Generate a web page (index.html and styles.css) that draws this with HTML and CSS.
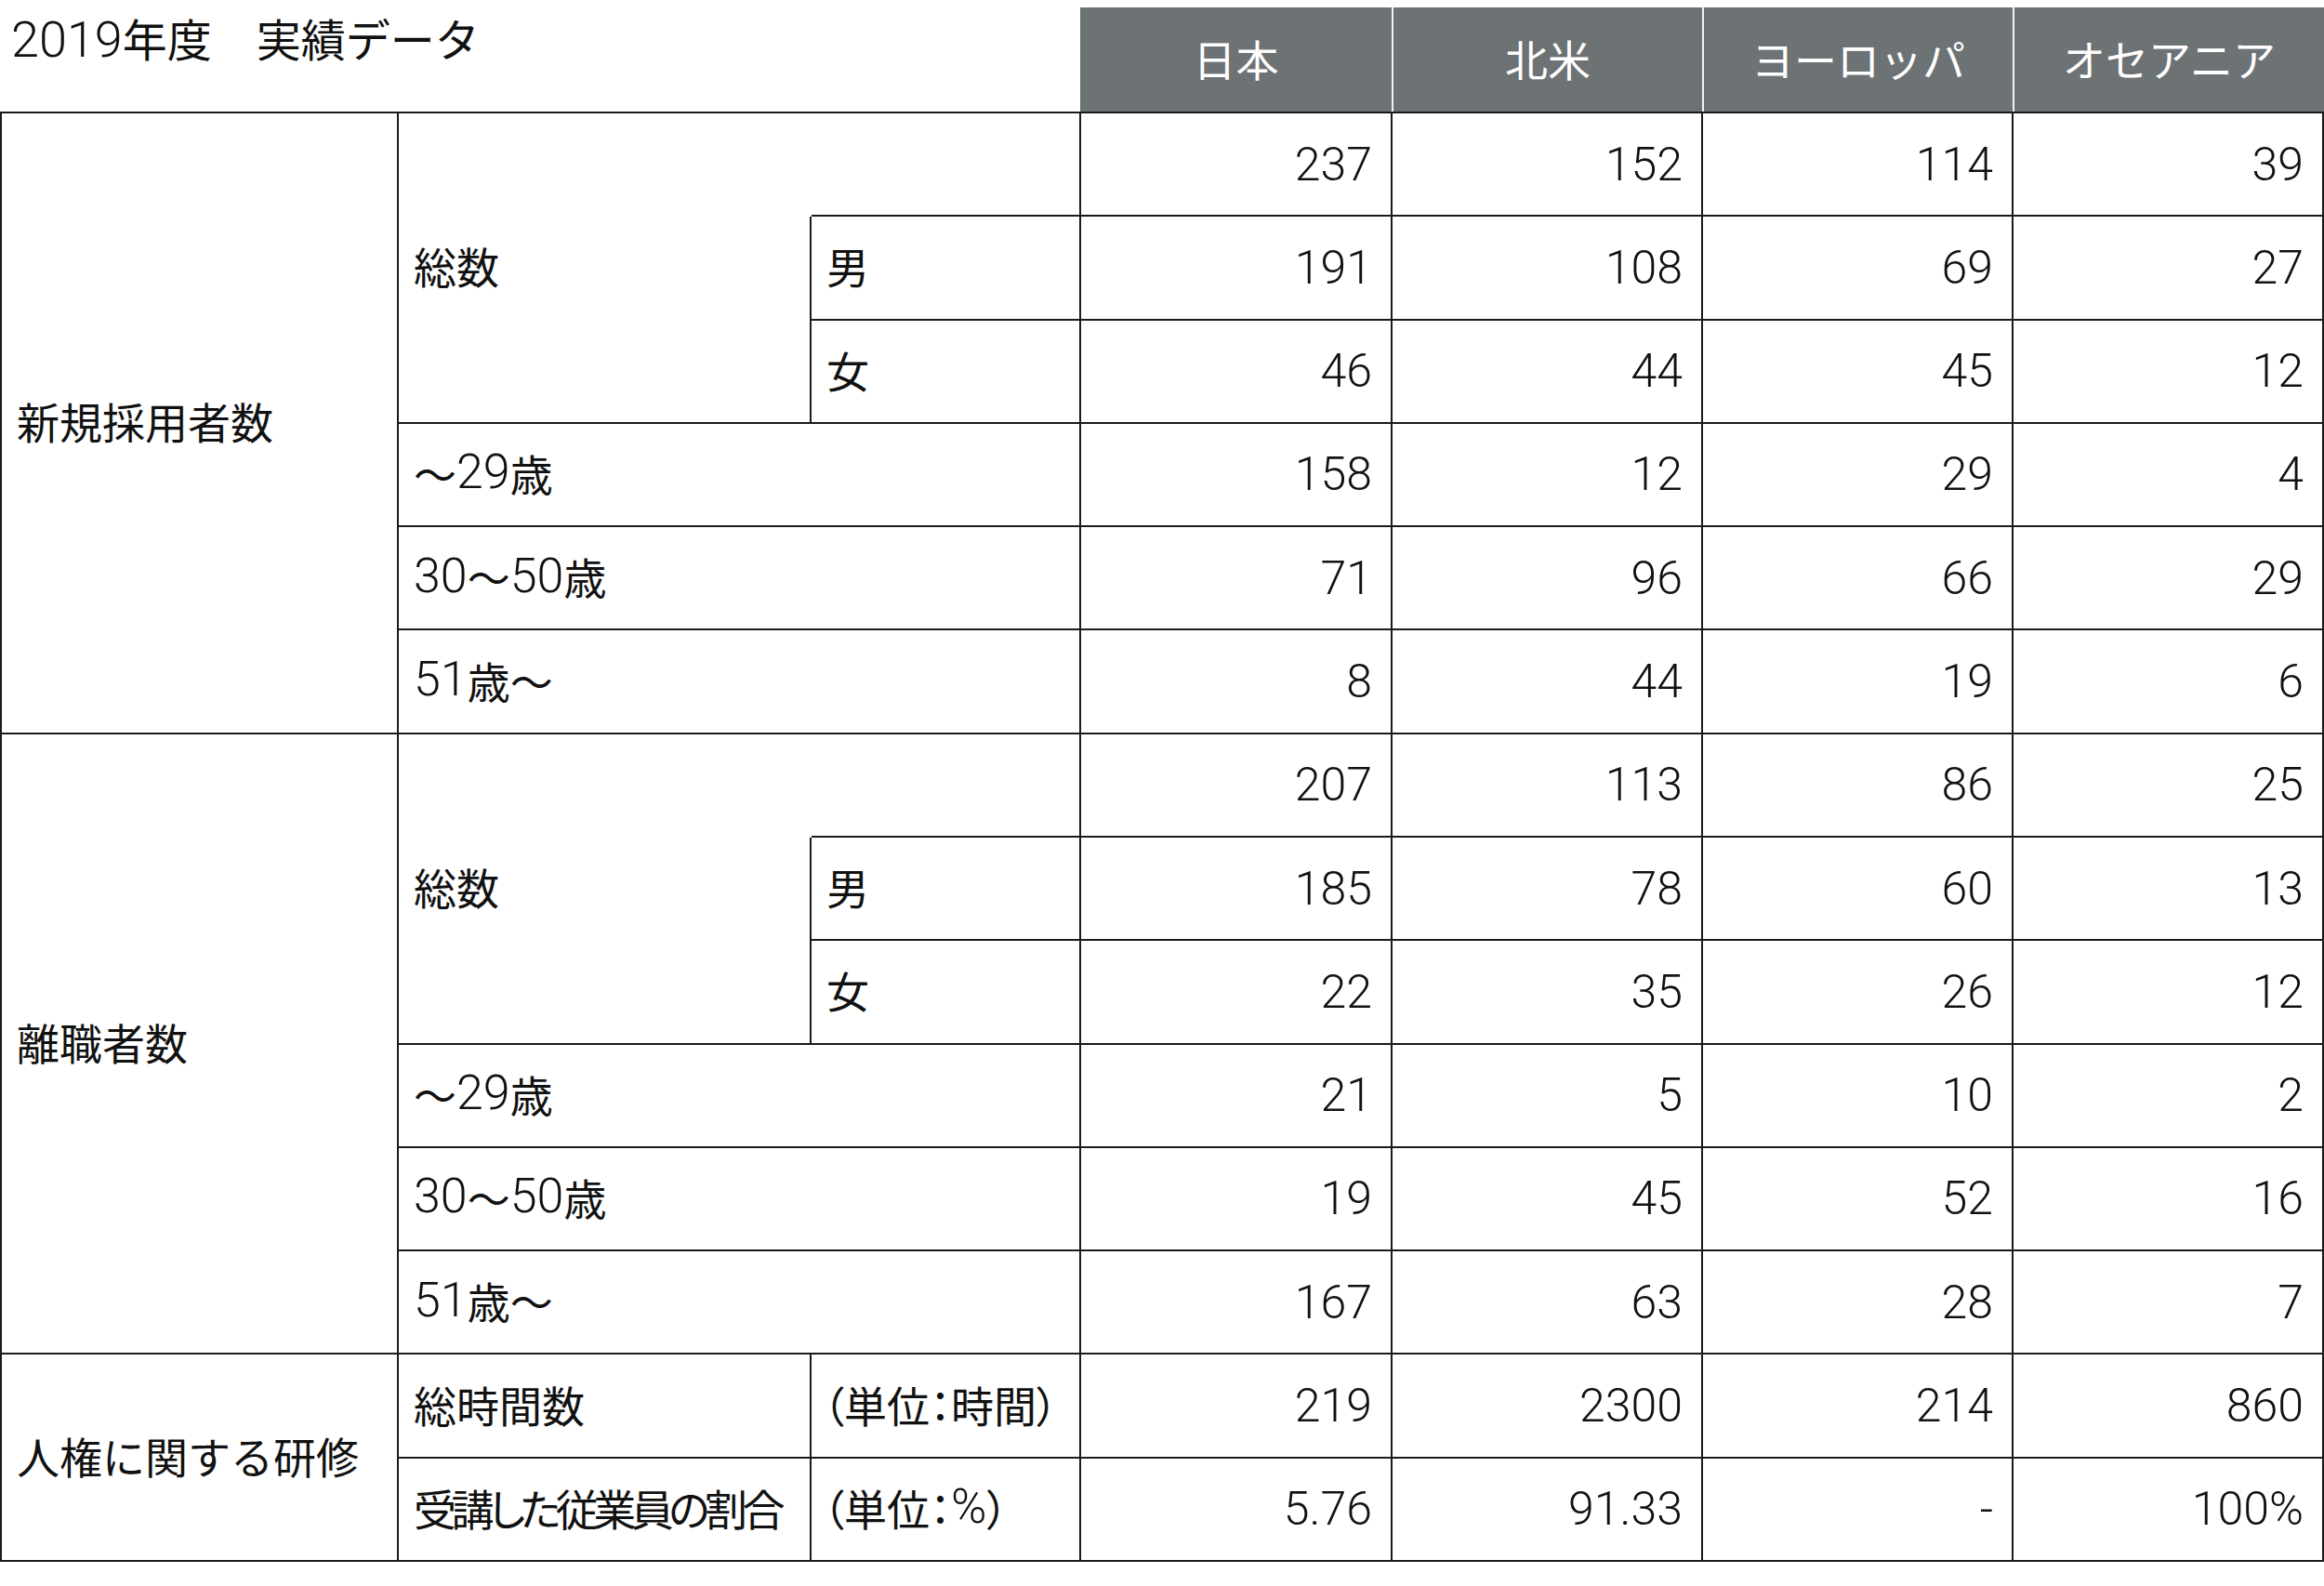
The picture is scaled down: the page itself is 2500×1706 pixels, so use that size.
FILE: index.html
```html
<!DOCTYPE html>
<html lang="ja">
<head>
<meta charset="utf-8">
<title>2019年度 実績データ</title>
<link rel="stylesheet" href="styles.css">
</head>
<body>
<div class="top">
  <div class="title"><span class="num">2019</span>年度　実績データ</div>
  <div class="head">
    <div class="hcell">日本</div>
    <div class="hcell">北米</div>
    <div class="hcell">ヨーロッパ</div>
    <div class="hcell">オセアニア</div>
  </div>
</div>
<div class="table">
  <div class="c rs6">新規採用者数</div>
  <div class="c rs3 noR">総数</div>
  <div class="c"></div>
  <div class="c n">237</div><div class="c n">152</div><div class="c n">114</div><div class="c n">39</div>
  <div class="c sex">男</div>
  <div class="c n">191</div><div class="c n">108</div><div class="c n">69</div><div class="c n">27</div>
  <div class="c sex">女</div>
  <div class="c n">46</div><div class="c n">44</div><div class="c n">45</div><div class="c n">12</div>
  <div class="c cs2">〜<span class="num">29</span>歳</div>
  <div class="c n">158</div><div class="c n">12</div><div class="c n">29</div><div class="c n">4</div>
  <div class="c cs2"><span class="num">30</span>〜<span class="num">50</span>歳</div>
  <div class="c n">71</div><div class="c n">96</div><div class="c n">66</div><div class="c n">29</div>
  <div class="c cs2"><span class="num">51</span>歳〜</div>
  <div class="c n">8</div><div class="c n">44</div><div class="c n">19</div><div class="c n">6</div>

  <div class="c rs6">離職者数</div>
  <div class="c rs3 noR">総数</div>
  <div class="c"></div>
  <div class="c n">207</div><div class="c n">113</div><div class="c n">86</div><div class="c n">25</div>
  <div class="c sex">男</div>
  <div class="c n">185</div><div class="c n">78</div><div class="c n">60</div><div class="c n">13</div>
  <div class="c sex">女</div>
  <div class="c n">22</div><div class="c n">35</div><div class="c n">26</div><div class="c n">12</div>
  <div class="c cs2">〜<span class="num">29</span>歳</div>
  <div class="c n">21</div><div class="c n">5</div><div class="c n">10</div><div class="c n">2</div>
  <div class="c cs2"><span class="num">30</span>〜<span class="num">50</span>歳</div>
  <div class="c n">19</div><div class="c n">45</div><div class="c n">52</div><div class="c n">16</div>
  <div class="c cs2"><span class="num">51</span>歳〜</div>
  <div class="c n">167</div><div class="c n">63</div><div class="c n">28</div><div class="c n">7</div>

  <div class="c rs2">人権に関する研修</div>
  <div class="c">総時間数</div>
  <div class="c unit">（単位：時間）</div>
  <div class="c n">219</div><div class="c n">2300</div><div class="c n">214</div><div class="c n">860</div>
  <div class="c tight">受講した従業員の割合</div>
  <div class="c unit">（単位：<span class="num">%</span>）</div>
  <div class="c n">5.76</div><div class="c n">91.33</div><div class="c n">-</div><div class="c n">100%</div>
</div>
</body>
</html>
```

FILE: styles.css
```css
* {
  box-sizing: border-box;
  margin: 0;
  padding: 0;
}

body {
  margin: 0;
  width: 2500px;
  background: #ffffff;
  color: #111111;
  font-family: "Noto Sans CJK JP", sans-serif;
}

.num {
  font-family: Roboto, "Liberation Sans", sans-serif;
  font-weight: 300;
  font-size: 52px;
}

.top {
  display: flex;
  height: 120px;
}

.title {
  width: 1162px;
  font-size: 48px;
  line-height: 72px;
  padding: 4px 0 0 12px;
  white-space: nowrap;
}

.title .num {
  font-size: 54px;
}

.head {
  display: grid;
  grid-template-columns: 335px 334px 334px 335px;
  margin-top: 8px;
  background: #6d7275;
}

.hcell {
  display: flex;
  align-items: center;
  justify-content: center;
  padding-bottom: 5px;
  color: #ffffff;
  font-size: 46px;
}

.hcell + .hcell {
  border-left: 2px solid #f2f2f2;
}

.table {
  display: grid;
  grid-template-columns: 427px 444px 290px 335px 334px 334px 334px;
  grid-template-rows: repeat(14, 1fr);
  height: 1560px;
  border-top: 2px solid #1a1a1a;
  border-left: 2px solid #1a1a1a;
}

.c {
  display: flex;
  align-items: center;
  padding: 0 16px 5px;
  font-size: 46px;
  white-space: nowrap;
  border-right: 2px solid #1a1a1a;
  border-bottom: 2px solid #1a1a1a;
}

.n {
  justify-content: flex-end;
  padding: 0 20px 0 0;
  font-family: Roboto, "Liberation Sans", sans-serif;
  font-weight: 300;
  font-size: 50px;
}

.rs6 { grid-row: span 6; }
.rs3 { grid-row: span 3; }
.rs2 { grid-row: span 2; }
.cs2 { grid-column: span 2; }

.noR {
  border-right: none;
}

.sex {
  margin-left: -2px;
  border-left: 2px solid #1a1a1a;
}

.unit {
  padding-left: 12px;
  font-feature-settings: "palt";
}

.tight {
  font-feature-settings: "palt";
  letter-spacing: -5.5px;
}
```
